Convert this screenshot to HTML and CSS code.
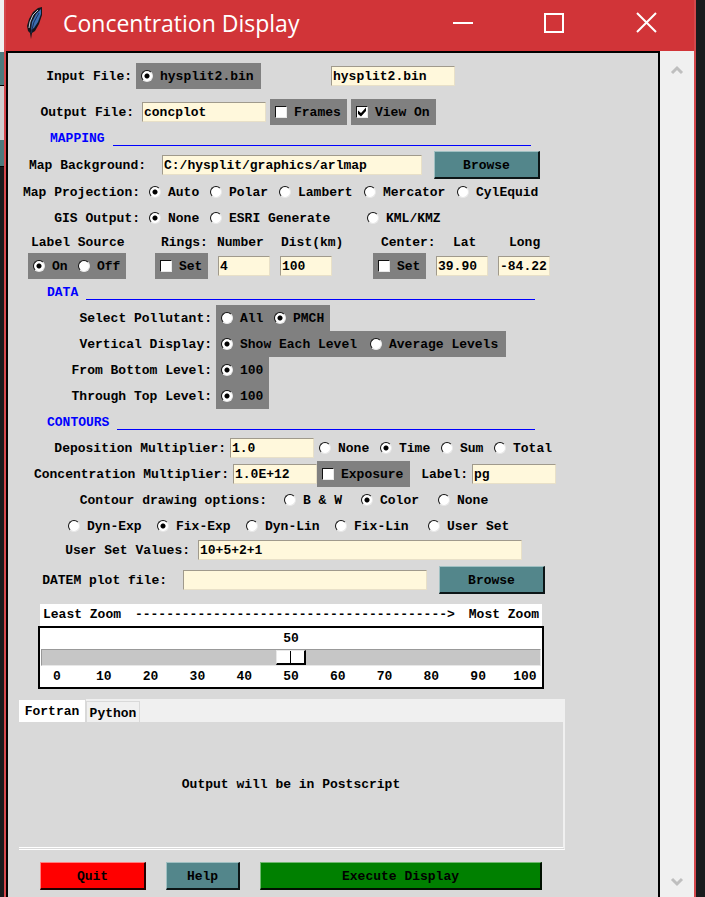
FILE: index.html
```html
<!DOCTYPE html>
<html lang="en">
<head>
    <meta charset="UTF-8">
    <meta name="viewport" content="width=device-width, initial-scale=1.0">
    <title>Concentration Display</title>
    <link rel="stylesheet" href="styles.css">
</head>
<body>
<div class="desktop">
    <div class="edge-left">
        <div class="edge-pale"></div>
        <div class="edge-teal"></div>
        <div class="edge-grey"></div>
        <div class="edge-teal small"></div>
    </div>

    <div class="window">
        <header class="titlebar">
            <svg class="feather" width="18" height="34" viewBox="0 0 18 34">
                <path d="M16 1 L12 2 L7 6 L3 13 L1 20 L2 25 L4 27 L5 33 L6 27 L9 25 L13 18 L16 9 Z" fill="#15151c"/>
                <path d="M15 3 L10 8 L6 16 L5 24 L8 22 L12 16 L15 8 Z" fill="#3c6db0"/>
                <path d="M12 4 L7 9 L4 16 L3 22" fill="none" stroke="#c3ccd6" stroke-width="1"/>
                <path d="M13 7 L8 16 L5 27" fill="none" stroke="#1c2f55" stroke-width="1"/>
            </svg>
            <h1>Concentration Display</h1>
            <div class="controls">
                <button aria-label="Minimize"><svg width="22" height="22" viewBox="0 0 22 22"><path d="M1 11H21" stroke="#fff" stroke-width="2"/></svg></button>
                <button aria-label="Maximize"><svg width="22" height="22" viewBox="0 0 22 22"><rect x="1" y="2" width="18" height="18" fill="none" stroke="#fff" stroke-width="2"/></svg></button>
                <button aria-label="Close"><svg width="22" height="22" viewBox="0 0 22 22"><path d="M1 1L20 20M20 1L1 20" stroke="#fff" stroke-width="2"/></svg></button>
            </div>
        </header>

        <div class="client">
            <form class="panel">
                <div class="row r-input">
                    <span class="label">Input File:</span>
                    <div class="group"><label class="opt"><input type="radio" name="infile" checked><span>hysplit2.bin</span></label></div>
                    <input type="text" class="entry" aria-label="Input file name" value="hysplit2.bin">
                </div>
                <div class="row r-output">
                    <label class="label" for="outfile">Output File:</label>
                    <input type="text" class="entry" id="outfile" value="concplot">
                    <div class="group"><label class="opt"><input type="checkbox"><span>Frames</span></label></div>
                    <div class="group"><label class="opt"><input type="checkbox" checked><span>View On</span></label></div>
                </div>

                <h2 class="mapping">MAPPING</h2>
                <div class="row r-map">
                    <label class="label" for="mapbg">Map Background:</label>
                    <input type="text" class="entry" id="mapbg" value="C:/hysplit/graphics/arlmap">
                    <button type="button" class="btn">Browse</button>
                </div>
                <div class="row r-proj">
                    <span class="label">Map Projection:</span>
                    <label class="opt"><input type="radio" name="proj" checked><span>Auto</span></label>
                    <label class="opt"><input type="radio" name="proj"><span>Polar</span></label>
                    <label class="opt"><input type="radio" name="proj"><span>Lambert</span></label>
                    <label class="opt"><input type="radio" name="proj"><span>Mercator</span></label>
                    <label class="opt"><input type="radio" name="proj"><span>CylEquid</span></label>
                </div>
                <div class="row r-gis">
                    <span class="label">GIS Output:</span>
                    <label class="opt"><input type="radio" name="gis" checked><span>None</span></label>
                    <label class="opt"><input type="radio" name="gis"><span>ESRI Generate</span></label>
                    <label class="opt"><input type="radio" name="gis"><span>KML/KMZ</span></label>
                </div>
                <div class="row r-heads">
                    <span>Label Source</span>
                    <span>Rings:</span>
                    <label for="ringnum">Number</label>
                    <label for="ringdist">Dist(km)</label>
                    <span>Center:</span>
                    <label for="lat">Lat</label>
                    <label for="long">Long</label>
                </div>
                <div class="row r-set">
                    <div class="group onoff">
                        <label class="opt"><input type="radio" name="src" checked><span>On</span></label>
                        <label class="opt"><input type="radio" name="src"><span>Off</span></label>
                    </div>
                    <div class="group"><label class="opt"><input type="checkbox"><span>Set</span></label></div>
                    <input type="text" class="entry" id="ringnum" value="4">
                    <input type="text" class="entry" id="ringdist" value="100">
                    <div class="group"><label class="opt"><input type="checkbox"><span>Set</span></label></div>
                    <input type="text" class="entry" id="lat" value="39.90">
                    <input type="text" class="entry" id="long" value="-84.22">
                </div>

                <h2>DATA</h2>
                <div class="row r-data">
                    <span class="label">Select Pollutant:</span>
                    <div class="group pollutant">
                        <label class="opt"><input type="radio" name="pol"><span>All</span></label>
                        <label class="opt"><input type="radio" name="pol" checked><span>PMCH</span></label>
                    </div>
                </div>
                <div class="row r-data">
                    <span class="label">Vertical Display:</span>
                    <div class="group vertical">
                        <label class="opt"><input type="radio" name="vert" checked><span>Show Each Level</span></label>
                        <label class="opt"><input type="radio" name="vert"><span>Average Levels</span></label>
                    </div>
                </div>
                <div class="row r-data">
                    <span class="label">From Bottom Level:</span>
                    <div class="group level"><label class="opt"><input type="radio" name="bottom" checked><span>100</span></label></div>
                </div>
                <div class="row r-data">
                    <span class="label">Through Top Level:</span>
                    <div class="group level"><label class="opt"><input type="radio" name="top" checked><span>100</span></label></div>
                </div>

                <h2>CONTOURS</h2>
                <div class="row r-dep">
                    <label class="label" for="dep">Deposition Multiplier:</label>
                    <input type="text" class="entry" id="dep" value="1.0">
                    <label class="opt"><input type="radio" name="depsum"><span>None</span></label>
                    <label class="opt"><input type="radio" name="depsum" checked><span>Time</span></label>
                    <label class="opt"><input type="radio" name="depsum"><span>Sum</span></label>
                    <label class="opt"><input type="radio" name="depsum"><span>Total</span></label>
                </div>
                <div class="row r-conc">
                    <label class="label" for="conc">Concentration Multiplier:</label>
                    <input type="text" class="entry" id="conc" value="1.0E+12">
                    <div class="group"><label class="opt"><input type="checkbox"><span>Exposure</span></label></div>
                    <label class="label" for="unit">Label:</label>
                    <input type="text" class="entry" id="unit" value="pg">
                </div>
                <div class="row r-draw">
                    <span class="label">Contour drawing options:</span>
                    <label class="opt"><input type="radio" name="draw"><span>B &amp; W</span></label>
                    <label class="opt"><input type="radio" name="draw" checked><span>Color</span></label>
                    <label class="opt"><input type="radio" name="draw"><span>None</span></label>
                </div>
                <div class="row r-scale">
                    <label class="opt"><input type="radio" name="cont"><span>Dyn-Exp</span></label>
                    <label class="opt"><input type="radio" name="cont" checked><span>Fix-Exp</span></label>
                    <label class="opt"><input type="radio" name="cont"><span>Dyn-Lin</span></label>
                    <label class="opt"><input type="radio" name="cont"><span>Fix-Lin</span></label>
                    <label class="opt"><input type="radio" name="cont"><span>User Set</span></label>
                </div>
                <div class="row r-user">
                    <label class="label" for="user">User Set Values:</label>
                    <input type="text" class="entry" id="user" value="10+5+2+1">
                </div>
                <div class="row r-datem">
                    <label class="label" for="datem">DATEM plot file:</label>
                    <input type="text" class="entry" id="datem">
                    <button type="button" class="btn">Browse</button>
                </div>

                <div class="zoom">
                    <label class="zoom-label" for="zoom"><span>Least Zoom</span><span>----------------------------------------&gt;</span><span>Most Zoom</span></label>
                    <div class="zoom-box">
                        <output for="zoom">50</output>
                        <input type="range" id="zoom" min="0" max="100" value="50">
                        <div class="ticks">
                            <span>0</span><span>10</span><span>20</span><span>30</span><span>40</span><span>50</span><span>60</span><span>70</span><span>80</span><span>90</span><span>100</span>
                        </div>
                    </div>
                </div>

                <div class="notebook">
                    <div class="tabs">
                        <button type="button" class="tab active">Fortran</button>
                        <button type="button" class="tab">Python</button>
                    </div>
                    <div class="pane">Output will be in Postscript</div>
                </div>

                <div class="actions">
                    <button type="button" class="btn quit">Quit</button>
                    <button type="button" class="btn help">Help</button>
                    <button type="button" class="btn run">Execute Display</button>
                </div>
            </form>

            <div class="scrollbar">
                <button aria-label="Scroll up"><svg width="14" height="10" viewBox="0 0 14 10"><path d="M2 8L7 3L12 8" fill="none" stroke="#bfbfbf" stroke-width="3"/></svg></button>
                <button aria-label="Scroll down"><svg width="14" height="10" viewBox="0 0 14 10"><path d="M2 2L7 7L12 2" fill="none" stroke="#bfbfbf" stroke-width="3"/></svg></button>
            </div>
        </div>
    </div>
    <div class="edge-right"></div>
</div>
</body>
</html>
```
FILE: styles.css
```css
* {
    box-sizing: border-box;
}
body {
    margin: 0;
    background: #191b1d;
    font-family: "Liberation Mono", "Courier New", monospace;
    font-size: 13px;
    font-weight: bold;
    color: #000;
}
button, input {
    font: inherit;
    color: inherit;
    margin: 0;
    padding: 0;
}
.desktop {
    display: flex;
    height: 100vh;
    overflow: hidden;
}

/* what shows behind the window */
.edge-left {
    width: 4px;
    background: #191b1d;
}
.edge-pale {
    height: 52px;
    background: #f0f0f0;
}
.edge-teal {
    height: 34px;
    background: #4b7b7e;
    border-bottom: 1px solid #000;
}
.edge-grey {
    height: 54px;
    background: #d0d0d0;
}
.edge-teal.small {
    height: 27px;
}
.edge-right {
    width: 9px;
    background: #191b1d;
}

/* window */
.window {
    flex: 1;
    display: flex;
    flex-direction: column;
    border: 0 solid #d4484c;
    border-width: 0 2px;
}
.titlebar {
    display: flex;
    align-items: center;
    height: 51px;
    flex-shrink: 0;
    background: #d13438;
    color: #fff;
    padding: 0 36px 6px 20px;
}
.titlebar h1 {
    margin: 0 0 0 19px;
    font: 23px "Open Sans", "Noto Sans", sans-serif;
    flex: 1;
}
.controls {
    display: flex;
    gap: 70px;
}
.controls button, .scrollbar button {
    background: none;
    border: 0;
    display: block;
    line-height: 0;
}
.client {
    flex: 1;
    display: flex;
    min-height: 0;
}
.panel {
    flex: 1;
    background: #d9d9d9;
    border: 2px solid #000;
    border-bottom: 0;
    padding-top: 10px;
}
.scrollbar {
    width: 34px;
    background: #f0f0f0;
    display: flex;
    flex-direction: column;
    justify-content: space-between;
    align-items: center;
    padding: 14px 0 10px;
}

/* rows */
.row {
    display: grid;
    align-items: center;
    height: 26px;
    white-space: nowrap;
}
.label {
    text-align: right;
    padding-right: 4px;
}
.r-input {
    grid-template-columns: 128px 195px 124px;
    margin-bottom: 10px;
}
.r-output {
    grid-template-columns: 134px 128px 81px 85px;
}
.r-map {
    grid-template-columns: 154px 272px 106px;
    height: 28px;
}
.r-proj {
    grid-template-columns: 136px 61px 69px 85px 93px 93px;
}
.r-gis {
    grid-template-columns: 136px 61px 157px 85px;
}
.r-heads {
    grid-template-columns: 130px 56px 64px 100px 72px 56px 48px;
    height: 22px;
    padding-left: 23px;
}
.r-set {
    grid-template-columns: 127px 63px 62px 93px 63px 62px 52px;
    padding-left: 20px;
}
.r-data {
    grid-template-columns: 208px auto;
}
.r-dep {
    grid-template-columns: 222px 84px 61px 61px 53px 69px;
}
.r-conc {
    grid-template-columns: 225px 84px 93px 62px 84px;
}
.r-draw {
    grid-template-columns: 271px 77px 77px 61px;
}
.r-scale {
    grid-template-columns: 89px 89px 89px 93px 93px;
    padding-left: 55px;
}
.r-user {
    grid-template-columns: 190px 324px;
    height: 22px;
}
.r-datem {
    grid-template-columns: 175px 256px 106px;
    height: 28px;
    margin: 5px 0 10px;
}
.r-output .label, .r-user .label {
    padding-right: 8px;
}
.r-map .label, .r-datem .label {
    padding-right: 16px;
}
.r-draw .label {
    padding-right: 12px;
}

h2 {
    display: flex;
    height: 26px;
    margin: 0 123px 0 39px;
    font: inherit;
    line-height: 28px;
    color: #0000ff;
}
h2.mapping {
    margin: 0 127px 0 42px;
}
h2::after {
    content: "";
    flex: 1;
    height: 20px;
    margin-left: 8px;
    border-bottom: 1px solid #0000ff;
}

/* controls */
.entry {
    width: 124px;
    height: 20px;
    padding: 0 0 0 1px;
    background: #fff8dc;
    border: 1px solid;
    border-color: #a09a8c #e8e0c8 #e8e0c8 #a09a8c;
    border-radius: 0;
}
.r-map .entry {
    width: 260px;
}
.r-set .entry {
    width: 52px;
}
.r-dep .entry, .r-conc .entry {
    width: 84px;
}
.r-user .entry {
    width: 324px;
}
.r-datem .entry {
    width: 244px;
}
.group {
    display: grid;
    align-items: center;
    justify-self: start;
    height: 26px;
    background: #808080;
    grid-template-columns: auto;
}
.r-input .group {
    width: 125px;
}
.r-output .group {
    width: 77px;
}
.r-output .group:last-child {
    width: 85px;
}
.r-set .group, .level {
    width: 53px;
}
.r-set .onoff {
    width: 98px;
    grid-template-columns: 45px 53px;
}
.pollutant {
    grid-template-columns: 53px 61px;
}
.vertical {
    grid-template-columns: 149px 141px;
}
.r-conc .group {
    width: 93px;
}
.opt {
    display: flex;
    align-items: center;
    gap: 7px;
    padding-left: 5px;
}
.opt input {
    appearance: none;
    flex-shrink: 0;
    width: 12px;
    height: 12px;
    background: #fff;
    border: 1px solid;
    border-color: #111 #e8e8e8 #e8e8e8 #111;
}
.opt input[type="radio"] {
    border-radius: 50%;
}
.opt input[type="radio"]:checked {
    background: radial-gradient(circle, #000 2px, #fff 3px);
}
.opt input[type="checkbox"]:checked::before {
    content: "";
    display: block;
    width: 10px;
    height: 10px;
    background: #000;
    clip-path: polygon(10% 35%, 40% 60%, 90% 5%, 90% 40%, 40% 95%, 10% 70%);
}
.btn {
    height: 28px;
    padding-top: 1px;
    background: #53868b;
    border: 2px solid;
    border-color: #a0c0c2 #0c1516 #0c1516 #a0c0c2;
    border-width: 1px 2px 2px 1px;
}

/* zoom scale */
.zoom {
    width: 506px;
    margin-left: 30px;
}
.zoom-label {
    display: flex;
    justify-content: space-between;
    margin: 0 2px;
    padding: 0 3px;
    height: 22px;
    line-height: 22px;
    background: #fff;
}
.zoom-box {
    display: flex;
    flex-direction: column;
    height: 63px;
    background: #fff;
    border: 2px solid #000;
    padding: 0 1px;
}
.zoom-box output, .ticks {
    height: 21px;
    line-height: 21px;
    text-align: center;
}
.zoom-box input {
    appearance: none;
    width: 100%;
    height: 17px;
    background: #c6c6c6;
    border: 1px solid;
    border-color: #999 #e8e8e8 #e8e8e8 #999;
}
.zoom-box input::-webkit-slider-thumb {
    appearance: none;
    width: 30px;
    height: 15px;
    background: linear-gradient(90deg, transparent 13px, #000 13px, #000 14px, transparent 14px) #fff;
    border: 1px solid;
    border-color: #e8e8e8 #000 #000 #e8e8e8;
    border-width: 1px 2px 2px 1px;
}
.ticks {
    display: flex;
    justify-content: space-between;
}
.ticks span {
    width: 32px;
}

/* tabs */
.notebook {
    margin: 10px 93px 12px 11px;
}
.tabs {
    display: flex;
    height: 23px;
    background: #f0f0f0;
}
.tab {
    width: 54px;
    margin-top: 2px;
    padding-top: 3px;
    background: #f0f0f0;
    border: 1px solid #d9d9d9;
    border-bottom: 0;
}
.tab.active {
    width: 67px;
    margin-top: 0;
    padding-top: 1px;
    background: #fff;
    border-width: 1px 1px 0 0;
}
.pane {
    height: 128px;
    display: flex;
    align-items: center;
    justify-content: center;
    border-right: 2px solid #f0f0f0;
    border-bottom: 3px double #fff;
}
.actions {
    display: grid;
    grid-template-columns: 106px 74px 282px;
    gap: 20px;
    padding-left: 32px;
}
.quit {
    background: #ff0000;
    border-color: #ff8080 #200 #200 #ff8080;
}
.run {
    background: #008000;
    border-color: #70b870 #001000 #001000 #70b870;
}
```
